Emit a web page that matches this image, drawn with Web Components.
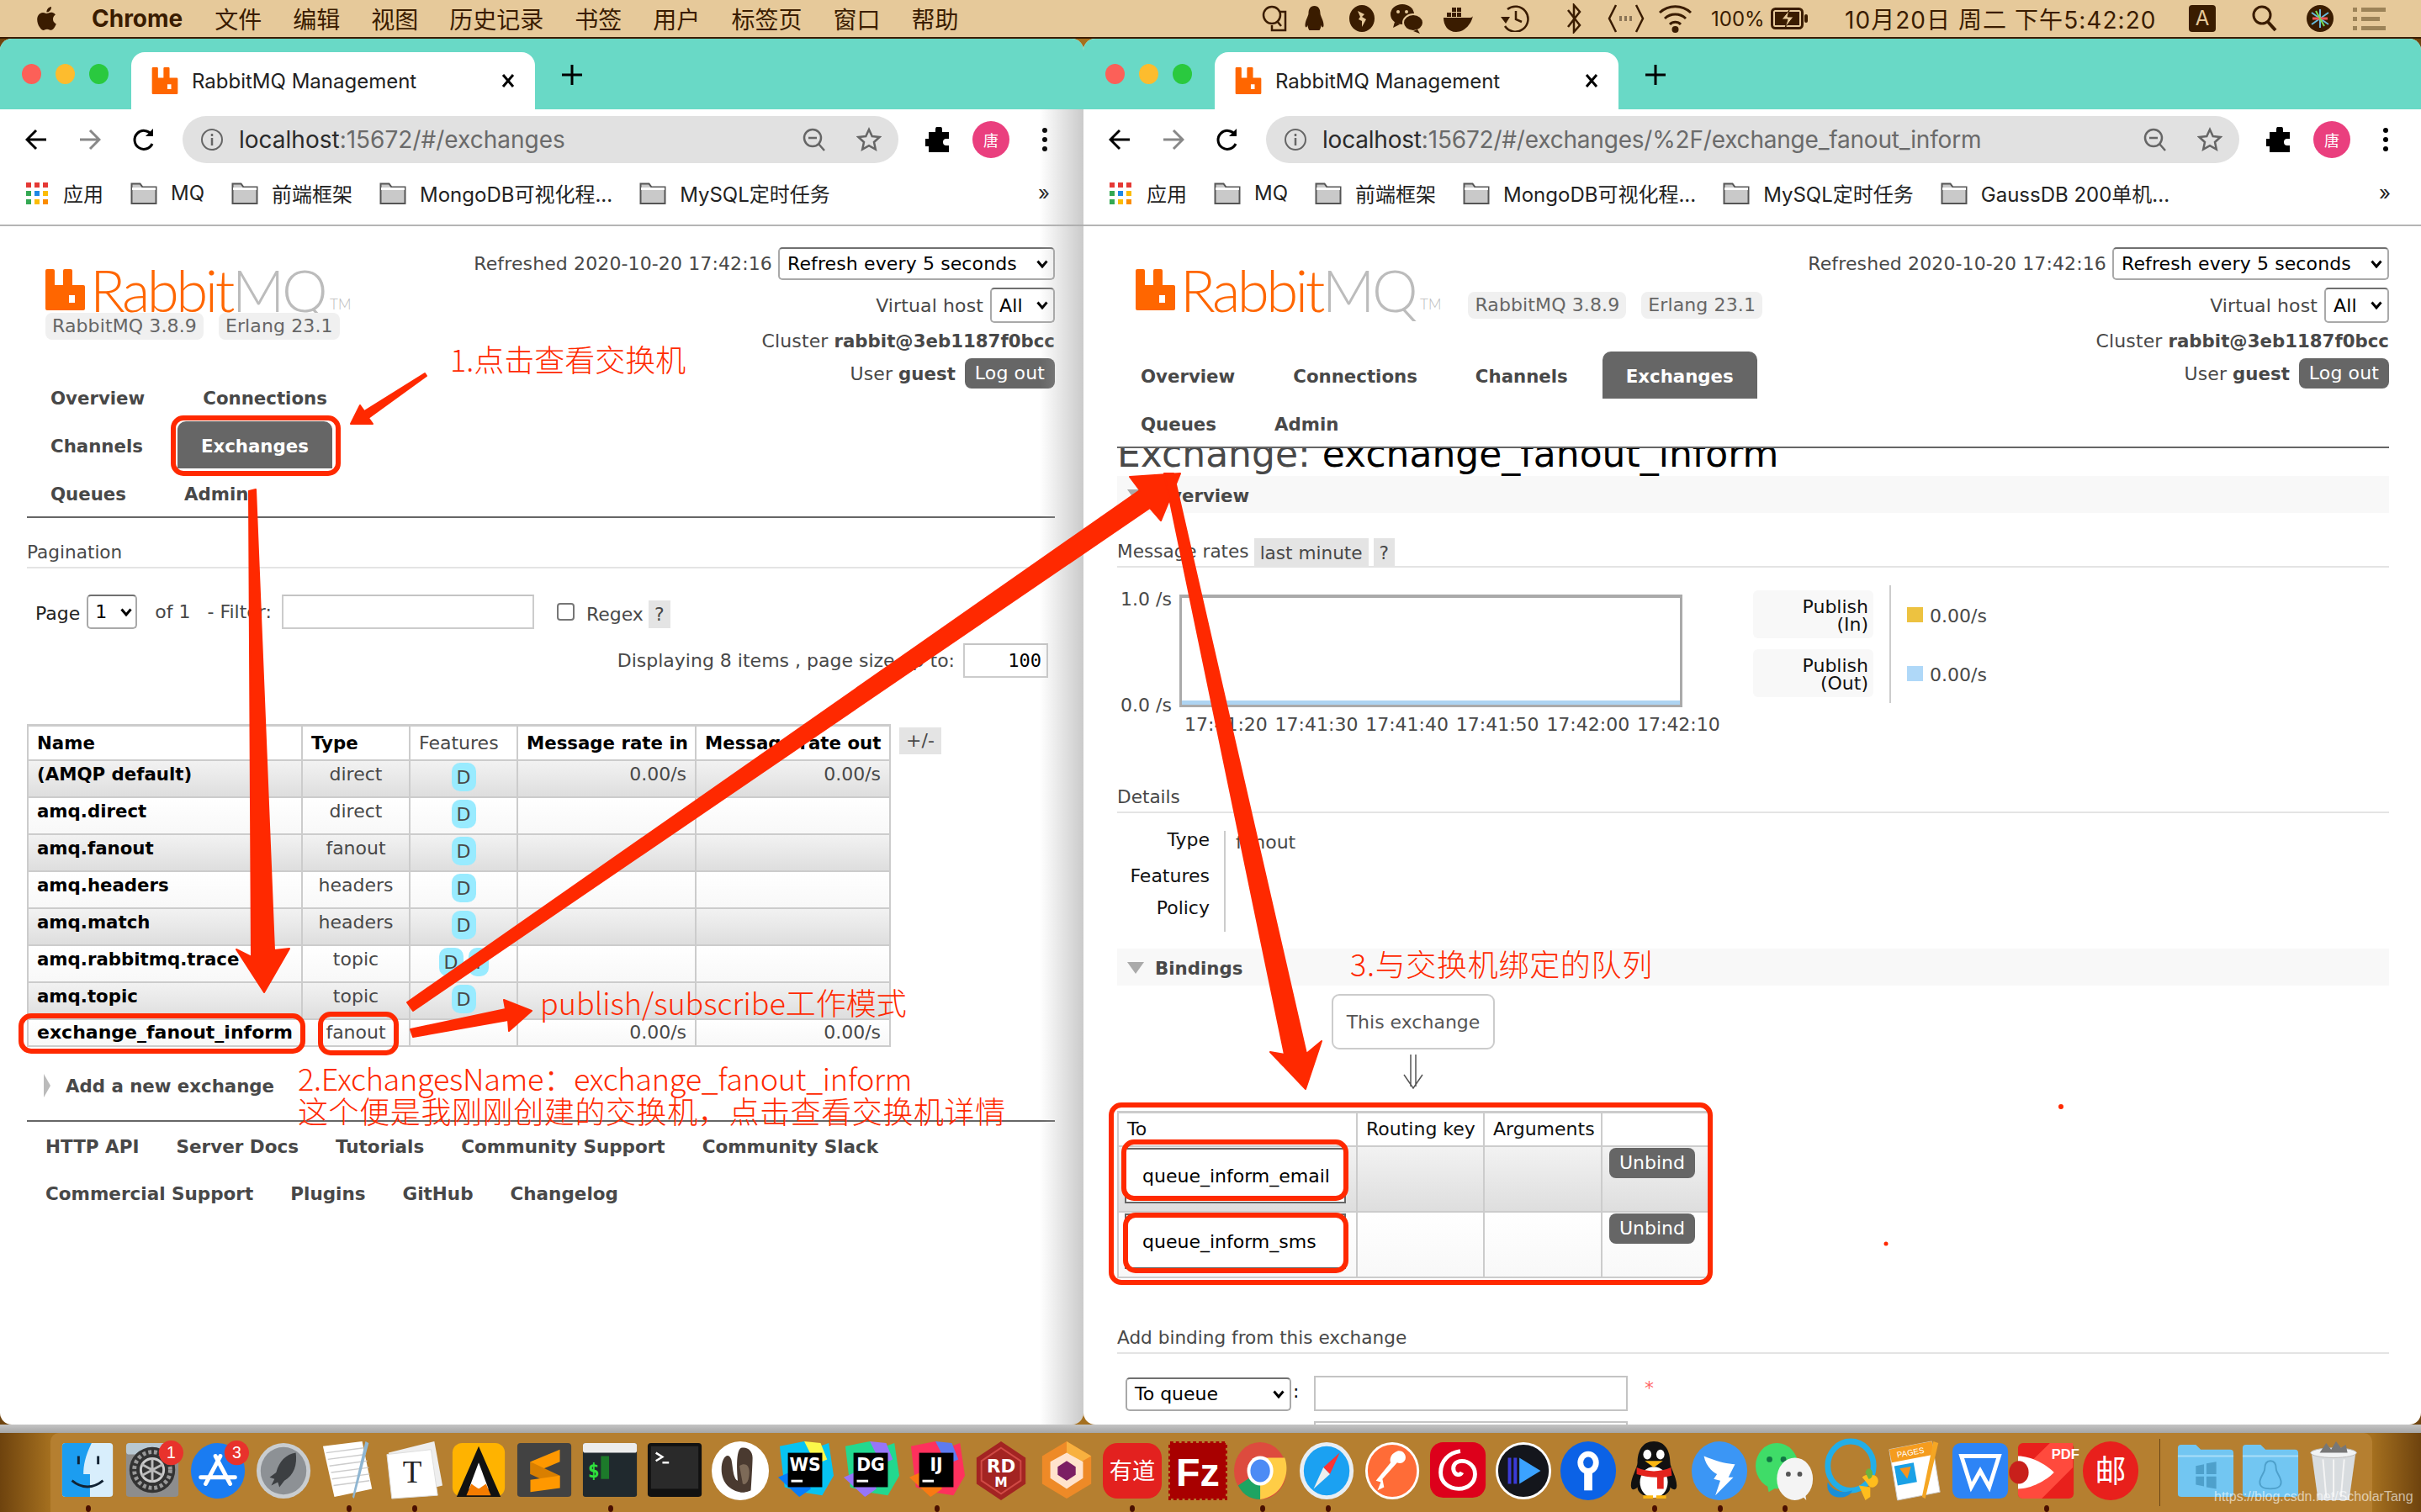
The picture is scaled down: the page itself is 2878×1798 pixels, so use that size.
<!DOCTYPE html>
<html lang="zh">
<head>
<meta charset="utf-8">
<title>RabbitMQ Management</title>
<style>
    html, body { margin: 0; padding: 0; }
    body {
        width: 2878px;
        height: 1798px;
        overflow: hidden;
        position: relative;
        display: flex;
        flex-direction: column;
        background: linear-gradient(90deg, #6e430e 0, #a5701f 60px, #a5701f 2820px, #6e430e 2878px);
    }
    .windows { display: flex; height: 1648px; flex: none; }
    .band { height: 10px; flex: none; background: linear-gradient(#c4c4c4, #a6a6a6); }
</style>
</head>
<body>
<mac-menubar></mac-menubar>
<div class="windows">
    <browser-window style="width:1288px" shade inset="4">
        <rmq-header stacked active="Exchanges"></rmq-header>
        <rmq-title top="25">Pagination</rmq-title>
        <pagination-row></pagination-row>
        <exchanges-table></exchanges-table>
        <rmq-footer></rmq-footer>
    </browser-window>
    <browser-window style="width:1590px" right extra>
        <rmq-header active="Exchanges"></rmq-header>
        <exchange-detail></exchange-detail>
    </browser-window>
</div>
<div class="band"></div>
<mac-dock></mac-dock>
<red-annotations></red-annotations>

<script>
const SANS = `Inter, "Noto Sans CJK SC", sans-serif`;
const PAGE_FONT = `"DejaVu Sans", "Noto Sans CJK SC", sans-serif`;
const BOLD_SIZE = "21.3px";

class MacMenubar extends HTMLElement {
    constructor() {
        super();
        this.shadowDOM = this.attachShadow({ mode: "open" });
    }

    connectedCallback() {
        const menus = ["文件", "编辑", "视图", "历史记录", "书签", "用户", "标签页", "窗口", "帮助"];
        this.shadowDOM.innerHTML = `
        <style>
            :host {
                display: flex;
                align-items: center;
                height: 44px;
                flex: none;
                background: #e6c99a;
                border-bottom: 2px solid #3a1c00;
                color: #3a1c00;
                font: 28px ${SANS};
                padding-left: 43px;
                box-sizing: content-box;
            }
            svg { display: block; flex: none; fill: #3a1c00; }
            b { font-weight: 700; margin: 0 1px 0 41px; }
            .menu { margin-left: 37px; white-space: nowrap; }
            .right { display: flex; align-items: center; margin-left: auto; padding-right: 42px; }
            .right > * { flex: none; }
            .pct { font-size: 24px; width: 61px; }
            .date { width: 368px; white-space: nowrap; font-size: 28px; letter-spacing: 1.05px; }
        </style>
        <svg width="25" height="32" viewBox="3 1 18 22"><path d="M18.71 19.5c-.83 1.24-1.71 2.45-3.05 2.47-1.34.03-1.77-.79-3.29-.79-1.53 0-2 .77-3.27.82-1.31.05-2.3-1.32-3.14-2.53C4.25 17 2.94 12.45 4.7 9.39c.87-1.52 2.43-2.48 4.12-2.51 1.28-.02 2.5.87 3.29.87.78 0 2.26-1.07 3.81-.91.65.03 2.47.26 3.64 1.98-.09.06-2.17 1.28-2.15 3.81.03 3.02 2.65 4.03 2.68 4.04-.03.07-.42 1.44-1.38 2.83M13 3.5c.73-.83 1.94-1.46 2.94-1.5.13 1.17-.34 2.35-1.04 3.19-.69.85-1.83 1.51-2.95 1.42-.15-1.15.41-2.35 1.05-3.11z"/></svg>
        <b>Chrome</b>
        ${menus.map(m => `<span class="menu">${m}</span>`).join("")}
        <div class="right">
            <svg width="31" height="32" viewBox="0 0 31 32" style="fill:none;stroke:#3a1c00;stroke-width:2.5"><circle cx="12" cy="12" r="10"/><path d="M18 19l5 6M21 8h7v22H12v-6"/></svg>
            <svg style="margin-left:19px" width="25" height="32" viewBox="0 0 25 32"><path d="M12.5 1c5 0 7 4 7 9 0 3 4 8 4 14 0 2-1 3-2 2l-1-2c0 3-2 6-2 6h-12s-2-3-2-6l-1 2c-1 1-2 0-2-2 0-6 4-11 4-14 0-5 2-9 7-9z"/></svg>
            <svg style="margin-left:29px" width="30" height="32" viewBox="0 0 30 32"><ellipse cx="15" cy="16" rx="15" ry="16"/><path d="M10 7l8 4-3 3 5 3-5 9 0-7-4-2 2-3z" fill="#e6c99a"/></svg>
            <svg style="margin-left:18px" width="40" height="36" viewBox="0 0 40 36"><ellipse cx="15" cy="13" rx="14" ry="12"/><path d="M6 22l-2 7 8-4z"/><ellipse cx="28" cy="23" rx="12" ry="10" stroke="#e6c99a" stroke-width="2"/><path d="M33 31l3 5-8-3z"/><circle cx="10" cy="10" r="2" fill="#e6c99a"/><circle cx="20" cy="10" r="2" fill="#e6c99a"/></svg>
            <svg style="margin-left:23px" width="36" height="32" viewBox="0 0 36 32"><path d="M1 15h32c3 0 3-3 3-3-1 9-9 20-20 20C6 32 1 24 1 15z"/><path d="M5 9h5v5H5zM11 9h5v5h-5zM17 9h5v5h-5zM11 3h5v5h-5zM17 3h5v5h-5z"/></svg>
            <svg style="margin-left:32px" width="36" height="32" viewBox="0 0 36 32"><path d="M9 5a15 15 0 1 1-3 20" fill="none" stroke="#3a1c00" stroke-width="2.5"/><path d="M1 14h11l-5 8z"/><path d="M19 7v10l7 3" fill="none" stroke="#3a1c00" stroke-width="2.5"/></svg>
            <svg style="margin-left:41px" width="22" height="36" viewBox="0 0 22 36"><path d="M4 8l14 18-7 8V2l7 8-14 18" fill="none" stroke="#3a1c00" stroke-width="2.5"/></svg>
            <svg style="margin-left:29px" width="44" height="36" viewBox="0 0 44 36"><path d="M10 2L2 18l8 16M34 2l8 16-8 16" fill="none" stroke="#3a1c00" stroke-width="2.5"/><path d="M14 15h3v6h-3zM20 15h3v6h-3zM26 15h3v6h-3z" fill="#8a7456"/></svg>
            <svg style="margin-left:16px" width="41" height="36" viewBox="0 0 41 36"><path d="M2 11a27 27 0 0 1 37 0M8 18a18 18 0 0 1 25 0M14 25a9 9 0 0 1 13 0" fill="none" stroke="#3a1c00" stroke-width="3"/><circle cx="20.5" cy="31" r="4"/></svg>
            <span class="pct" style="margin-left:22px">100%</span>
            <svg style="margin-left:10px" width="44" height="26" viewBox="0 0 44 26"><rect x="1.5" y="1.5" width="36" height="23" rx="4" fill="none" stroke="#3a1c00" stroke-width="3"/><rect x="40" y="8" width="4" height="10" rx="2"/><rect x="5" y="5" width="29" height="16"/><path d="M22 3l-9 11h7l-3 10 10-13h-7z" fill="#e6c99a" stroke="#3a1c00"/></svg>
            <span class="date" style="margin-left:44px">10月20日 周二 下午5:42:20</span>
            <span style="margin-left:41px;width:32px;height:32px;border-radius:4px;background:#3a1c00;color:#e6c99a;font-size:24px;text-align:center;line-height:32px">A</span>
            <svg style="margin-left:43px" width="31" height="32" viewBox="0 0 31 32"><circle cx="12" cy="12" r="10" fill="none" stroke="#3a1c00" stroke-width="3"/><path d="M19 20l9 10" stroke="#3a1c00" stroke-width="4"/></svg>
            <svg style="margin-left:33px" width="34" height="32" viewBox="0 0 34 32"><circle cx="17" cy="16" r="16" fill="#3a1c00"/><path d="M17 5v22M7 9l20 14M27 9L7 23" stroke="#6bd" stroke-width="2"/><path d="M8 16h18" stroke="#e55" stroke-width="3"/><path d="M12 7l10 18" stroke="#7d5" stroke-width="2"/></svg>
            <svg style="margin-left:22px" width="39" height="30" viewBox="0 0 39 30"><path d="M0 2h5v5H0zM10 2h29v5H10zM0 13h5v5H0zM10 13h22v5H10zM0 24h5v5H0zM10 24h29v5H10z" fill="#9c8358"/></svg>
        </div>`;
    }
}
customElements.define("mac-menubar", MacMenubar);

// Folder for the bookmark bar
const FOLDER = `<svg width="32" height="26" viewBox="0 0 32 26" style="flex:none"><path d="M1.5 25V1.5h10l3 4h16V25z" fill="#c9c9c9" stroke="#555" stroke-width="2"/><path d="M2 6h28v3H2z" fill="#fff"/></svg>`;
const RABBIT = (w, h) => `<svg width="${w}" height="${h}" viewBox="0 0 47 49" style="display:block;flex:none"><path fill="#ff6600" fill-rule="evenodd" d="M2 0h7a2 2 0 0 1 2 2v17h10V2a2 2 0 0 1 2-2h7a2 2 0 0 1 2 2v17h13a2 2 0 0 1 2 2v26a2 2 0 0 1-2 2H2a2 2 0 0 1-2-2V2a2 2 0 0 1 2-2zM28 31v9h7v-9z"/></svg>`;

class BrowserWindow extends HTMLElement {
    constructor() {
        super();
        this.shadowDOM = this.attachShadow({ mode: "open" });
    }

    connectedCallback() {
        const isRight = this.hasAttribute("right");
        const url = isRight
            ? `<span>localhost</span>:15672/#/exchanges/%2F/exchange_fanout_inform`
            : `<span>localhost</span>:15672/#/exchanges`;
        const marks = ["MQ", "前端框架", "MongoDB可视化程...", "MySQL定时任务"];
        if (isRight) marks.push("GaussDB 200单机...");
        const inset = parseInt(this.getAttribute("inset") || "0");

        this.shadowDOM.innerHTML = `
        <style>
            :host {
                display: flex;
                flex-direction: column;
                flex: none;
                position: relative;
                height: 1648px;
                overflow: hidden;
                background: #fff;
                border-radius: 14px;
                color: #000;
            }
            .strip {
                height: 84px;
                flex: none;
                background: #69d9c6;
                display: flex;
                align-items: flex-end;
                position: relative;
            }
            .lights {
                display: flex;
                gap: 17px;
                align-self: center;
                padding-left: 26px;
                width: 130px;
                box-sizing: border-box;
                flex: none;
            }
            .lights i { width: 23px; height: 24px; border-radius: 50%; display: block; flex: none; }
            .tab {
                width: 480px;
                height: 68px;
                background: #fff;
                border-radius: 16px 16px 0 0;
                display: flex;
                align-items: center;
                margin-left: 26px;
                padding: 0 20px 0 24px;
                box-sizing: border-box;
                font: 24px ${SANS};
                color: #222;
                flex: none;
            }
            .tab span { margin-left: 16px; flex: 1; white-space: nowrap; }
            .tab svg.x { flex: none; margin-right: 4px; }
            .plus { margin: 0 0 29px 32px; flex: none; }
            .toolbar {
                height: 72px;
                flex: none;
                display: flex;
                align-items: center;
                padding-left: 11px;
                padding-right: ${10 + inset}px;
            }
            .btn { width: 64px; height: 56px; display: flex; align-items: center; justify-content: center; flex: none; }
            .omni {
                flex: 1;
                height: 56px;
                margin: 0 14px;
                background: #e1e1e1;
                border-radius: 28px;
                display: flex;
                align-items: center;
                padding: 0 20px 0 22px;
                box-sizing: border-box;
                font: 28px ${SANS};
                color: #6a6a6a;
                white-space: nowrap;
            }
            .omni span { color: #2a2a2a; }
            .omni .url { margin-left: 19px; flex: 1; ${isRight ? "letter-spacing: -.2px;" : ""} }
            .avatar {
                width: 44px;
                height: 44px;
                border-radius: 50%;
                background: #ea3f7e;
                color: #fff;
                font: 18px "Noto Sans CJK SC", sans-serif;
                display: flex;
                align-items: center;
                justify-content: center;
            }
            .marks {
                height: 55px;
                flex: none;
                border-bottom: 2px solid #b4b4b4;
                box-sizing: content-box;
                display: flex;
                align-items: center;
                padding-left: 31px;
                gap: 32px;
                font: 24px ${SANS};
                color: #222;
                padding-bottom: 10px;
                padding-right: ${36 + inset}px;
                white-space: nowrap;
            }
            .mark { display: flex; align-items: center; gap: 16px; }
            .apps { display: grid; grid-template-columns: repeat(3, 6px); grid-auto-rows: 6px; gap: 4px; }
            .apps i { display: block; }
            .more { margin-left: auto; font-size: 24px; }
            .page {
                flex: 1;
                min-height: 0;
                padding: 0 ${isRight ? 38 : 34}px 0 ${isRight ? 40 : 32}px;
                position: relative;
                overflow: hidden;
            }
            .shade {
                position: absolute;
                right: 0;
                top: 84px;
                bottom: 0;
                width: 52px;
                background: linear-gradient(90deg, rgba(170,170,170,0), rgba(170,170,170,.62));
                pointer-events: none;
            }
        </style>
        <div class="strip">
            <div class="lights"><i style="background:#fc6058"></i><i style="background:#fdbc2e"></i><i style="background:#2ac93f"></i></div>
            <div class="tab">
                ${RABBIT(32, 32)}
                <span>RabbitMQ Management</span>
                <svg class="x" width="16" height="18" viewBox="0 0 16 18"><path d="M2 2l12 14M14 2L2 16" stroke="#000" stroke-width="3"/></svg>
            </div>
            <svg class="plus" width="24" height="24" viewBox="0 0 24 24"><path d="M12 0v24M0 12h24" stroke="#000" stroke-width="3"/></svg>
        </div>
        <div class="toolbar">
            <div class="btn"><svg width="26" height="26" viewBox="0 0 26 26" fill="none" stroke="#000" stroke-width="3"><path d="M25 13H3M13 2L2 13l11 11"/></svg></div>
            <div class="btn"><svg width="26" height="26" viewBox="0 0 26 26" fill="none" stroke="#888" stroke-width="3"><path d="M1 13h22M13 2l11 11-11 11"/></svg></div>
            <div class="btn"><svg width="28" height="28" viewBox="0 0 28 28" fill="none" stroke="#000" stroke-width="3"><path d="M24 19a11 11 0 1 1-1-11"/><path d="M25 1v9h-9" fill="#000" stroke="none"/></svg></div>
            <div class="omni">
                <svg width="26" height="26" viewBox="0 0 26 26" fill="none" stroke="#666" stroke-width="2"><circle cx="13" cy="13" r="12"/><path d="M13 11v9M13 6v3" stroke-width="2.5"/></svg>
                <div class="url">${url}</div>
                <svg width="28" height="28" viewBox="0 0 28 28" fill="none" stroke="#666" stroke-width="2.5"><circle cx="12" cy="12" r="10"/><path d="M7 12h10M19 19l7 8"/></svg>
                <svg style="margin-left:36px" width="30" height="30" viewBox="0 0 30 30" fill="none" stroke="#666" stroke-width="2.5"><path d="M15 3l3.7 8 8.8 1-6.5 6 1.8 8.6L15 22.2l-7.8 4.4L9 18l-6.5-6 8.8-1z"/></svg>
            </div>
            <div class="btn"><svg width="28" height="30" viewBox="0 0 28 30"><path d="M11 3a4 4 0 0 1 8 0v3h8v8h-3a4 4 0 0 0 0 8h3v8H3v-7H0a4 4 0 0 1 0-9h3V6h8z" transform="translate(1)"/></svg></div>
            <div class="btn"><div class="avatar">唐</div></div>
            <div class="btn"><svg width="6" height="28" viewBox="0 0 6 28"><circle cx="3" cy="3" r="3"/><circle cx="3" cy="14" r="3"/><circle cx="3" cy="25" r="3"/></svg></div>
        </div>
        <div class="marks">
            <div class="mark" style="gap:18px">
                <div class="apps">
                    <i style="background:#e53935"></i><i style="background:#e53935"></i><i style="background:#e53935"></i>
                    <i style="background:#34a853"></i><i style="background:#1e88e5"></i><i style="background:#fbbc05"></i>
                    <i style="background:#34a853"></i><i style="background:#fbbc05"></i><i style="background:#fb8c00"></i>
                </div>
                应用
            </div>
            ${marks.map(m => `<div class="mark">${FOLDER}${m}</div>`).join("")}
            <div class="more">»</div>
        </div>
        <div class="page"><slot></slot></div>
        ${this.hasAttribute("shade") ? `<div class="shade"></div>` : ""}`;
    }
}
customElements.define("browser-window", BrowserWindow);

class RmqSelect extends HTMLElement {
    constructor() {
        super();
        this.shadowDOM = this.attachShadow({ mode: "open" });
    }

    connectedCallback() {
        this.shadowDOM.innerHTML = `
        <style>
            :host {
                display: inline-flex;
                align-items: center;
                box-sizing: border-box;
                background: #fff;
                border: 2px solid #a9a9a9;
                border-top-color: #707070;
                border-radius: 5px;
                color: #000;
                padding: 0 6px 0 9px;
                font: 22px ${PAGE_FONT};
                white-space: nowrap;
                flex: none;
                justify-content: space-between;
            }
            svg { flex: none; margin-left: 6px; }
        </style>
        <span><slot></slot></span>
        <svg width="14" height="10" viewBox="0 0 14 10" fill="none" stroke="#000" stroke-width="3"><path d="M1.5 1.5L7 8l5.500-6.500"/></svg>`;
    }
}
customElements.define("rmq-select", RmqSelect);

class RmqHeader extends HTMLElement {
    constructor() {
        super();
        this.shadowDOM = this.attachShadow({ mode: "open" });
    }

    connectedCallback() {
        const stacked = this.hasAttribute("stacked");
        const active = this.getAttribute("active");
        const tabs = ["Overview", "Connections", "Channels", "Exchanges", "Queues", "Admin"];
        this.shadowDOM.innerHTML = `
        <style>
            :host {
                display: flex;
                justify-content: space-between;
                align-items: flex-start;
                border-bottom: 2px solid #666;
                color: #484848;
                font: 22px ${PAGE_FONT};
                letter-spacing: .12px;
            }
            .left { padding-top: 51px; flex: none; }
            .brand {
                display: flex;
                padding-left: 22px;
                ${stacked ? "flex-direction: column; gap: 3px;" : "align-items: flex-end;"}
            }
            .logo { display: flex; align-items: flex-end; height: 49px; flex: none; }
            .word {
                font: 300 69px Lato, "Liberation Sans", sans-serif;
                line-height: 49px;
                height: 49px;
                margin-left: 6px;
                letter-spacing: -3.5px;
                color: #ff6600;
                white-space: nowrap;
            }
            .word em { font-style: normal; color: #bcbcbc; }
            .tm { font: 300 17px Lato, sans-serif; letter-spacing: 0; color: #bcbcbc; margin-left: 6px; line-height: 14px; }
            .vers { display: flex; gap: 18px; ${stacked ? "" : "margin: 0 0 -10px 32px;"} }
            .vers span {
                background: #f0f0f0;
                border-radius: 8px;
                height: 32px;
                line-height: 32px;
                padding: 0 8px;
                white-space: nowrap;
                color: #666;
            }
            nav {
                display: flex;
                flex-wrap: wrap;
                column-gap: 13px;
                row-gap: 1px;
                width: ${stacked ? 480 : 820}px;
                margin-top: ${stacked ? 40 : 49}px;
            }
            nav a {
                height: 56px;
                line-height: 59px;
                padding: 0 28px;
                font-weight: 700;
                font-size: ${BOLD_SIZE};
                letter-spacing: 0;
                color: #484848;
                white-space: nowrap;
                border-radius: 10px 10px 0 0;
            }
            nav a.on { background: #666; color: #fff; }
            .info {
                margin-top: 25px;
                display: flex;
                flex-direction: column;
                align-items: flex-end;
                flex: none;
            }
            .line { display: flex; align-items: center; gap: 7px; white-space: nowrap; }
            b { color: #484848; font-size: ${BOLD_SIZE}; letter-spacing: 0; }
            .logout {
                background: #666;
                color: #fff;
                border-radius: 8px;
                height: 36px;
                line-height: 36px;
                padding: 0 12px;
                margin-left: 4px;
            }
        </style>
        <div class="left">
            <div class="brand">
                <div class="logo">
                    ${RABBIT(47, 49)}
                    <div class="word">Rabbit<em>MQ</em></div>
                    <div class="tm">TM</div>
                </div>
                <div class="vers"><span>RabbitMQ 3.8.9</span><span>Erlang 23.1</span></div>
            </div>
            <nav>${tabs.map(t => `<a class="${t === active ? "on" : ""}">${t}</a>`).join("")}</nav>
        </div>
        <div class="info">
            <div class="line">Refreshed 2020-10-20 17:42:16 <rmq-select style="height:39px;width:329px">Refresh every 5 seconds</rmq-select></div>
            <div class="line" style="margin-top:9px;gap:8px">Virtual host <rmq-select style="height:42px;width:77px">All</rmq-select></div>
            <div class="line" style="margin-top:5px;height:33px">Cluster <b>rabbit@3eb1187f0bcc</b></div>
            <div class="line" style="margin-top:4px">User <b>guest</b> <span class="logout">Log out</span></div>
        </div>`;
    }
}
customElements.define("rmq-header", RmqHeader);

class RmqTitle extends HTMLElement {
    constructor() {
        super();
        this.shadowDOM = this.attachShadow({ mode: "open" });
    }

    connectedCallback() {
        this.shadowDOM.innerHTML = `
        <style>
            :host {
                display: flex;
                align-items: flex-end;
                height: 35px;
                box-sizing: border-box;
                border-bottom: 2px solid #e4e4e4;
                margin-top: ${this.getAttribute("top") || 0}px;
                color: #484848;
                font: 21.6px/35px ${PAGE_FONT};
                gap: 6px;
            }
            ::slotted(span) {
                background: #e4e4e4;
                padding: 0 7px;
                line-height: 35px;
                height: 33px;
            }
        </style>
        <slot></slot>`;
    }
}
customElements.define("rmq-title", RmqTitle);

class RmqPanel extends HTMLElement {
    constructor() {
        super();
        this.shadowDOM = this.attachShadow({ mode: "open" });
    }

    connectedCallback() {
        this.shadowDOM.innerHTML = `
        <style>
            :host {
                display: flex;
                align-items: center;
                height: 44px;
                box-sizing: border-box;
                padding-top: 2px;
                background: #f8f8f8;
                padding-left: 12px;
                color: #484848;
                font: 700 ${BOLD_SIZE} ${PAGE_FONT};
                gap: 13px;
            }
            svg { flex: none; }
        </style>
        <svg width="20" height="14" viewBox="0 0 20 14"><path d="M0 0h20L10 14z" fill="#aaa"/></svg>
        <slot></slot>`;
    }
}
customElements.define("rmq-panel", RmqPanel);

class PaginationRow extends HTMLElement {
    constructor() {
        super();
        this.shadowDOM = this.attachShadow({ mode: "open" });
    }

    connectedCallback() {
        this.shadowDOM.innerHTML = `
        <style>
            :host {
                display: block;
                color: #484848;
                font: 22px ${PAGE_FONT};
            }
            .row { display: flex; align-items: center; height: 41px; margin-top: 31px; padding-left: 10px; white-space: nowrap; }
            .box {
                box-sizing: border-box;
                height: 41px;
                border: 2px solid #ccc;
                border-top-color: #c4c4c4;
                background: #fff;
                flex: none;
            }
            .check {
                width: 21px;
                height: 21px;
                box-sizing: border-box;
                border: 2px solid #767676;
                border-radius: 4px;
                background: #fff;
                flex: none;
                margin: 0 14px 0 27px;
            }
            .help { background: #e4e4e4; height: 33px; width: 26px; text-align: center; line-height: 33px; margin: 6px 0 0 6px; flex: none; }
            .size {
                display: flex;
                align-items: center;
                justify-content: flex-end;
                height: 41px;
                margin-top: 17px;
                padding-right: 8px;
                white-space: nowrap;
            }
            .mono {
                width: 101px;
                margin-left: 10px;
                font: 22px "DejaVu Sans Mono", monospace;
                color: #000;
                text-align: right;
                padding-right: 6px;
                line-height: 37px;
            }
        </style>
        <div class="row">
            <span style="color:#222;padding-top:3px">Page</span>
            <rmq-select style="width:60px;height:41px;margin-left:8px;padding:0 4px 0 8px">1</rmq-select>
            <span style="margin-left:21px">of 1</span>
            <span style="margin-left:20px">- Filter:</span>
            <div class="box" style="width:300px;margin-left:12px"></div>
            <div class="check"></div>
            <span style="padding-top:6px">Regex</span>
            <div class="help">?</div>
        </div>
        <div class="size">Displaying 8 items , page size up to:<div class="box mono">100</div></div>`;
    }
}
customElements.define("pagination-row", PaginationRow);

const TABLE_CSS = `
    table { border-collapse: collapse; table-layout: fixed; font: 22px/22px ${PAGE_FONT}; color: #484848; }
    th, td { border: 2px solid #ccc; padding: 5px 10px 0; vertical-align: top; box-sizing: border-box; overflow: visible; white-space: nowrap; }
    th { text-align: left; font-weight: 400; background: #fff; vertical-align: middle; padding-top: 2px; }
    tr:first-child th { border-top-width: 3px; }
    tr.a td { background: linear-gradient(#f2f2f2, #dedede); }
    tr.b td { background: linear-gradient(#fff, #f8f8f8); }
    th.b { font-weight: 700; color: #000; font-size: ${BOLD_SIZE}; }
`;

class ExchangesTable extends HTMLElement {
    constructor() {
        super();
        this.shadowDOM = this.attachShadow({ mode: "open" });
    }

    connectedCallback() {
        const rows = [
            ["(AMQP default)", "direct", "D", "0.00/s", "0.00/s"],
            ["amq.direct", "direct", "D", "", ""],
            ["amq.fanout", "fanout", "D", "", ""],
            ["amq.headers", "headers", "D", "", ""],
            ["amq.match", "headers", "D", "", ""],
            ["amq.rabbitmq.trace", "topic", "DI", "", ""],
            ["amq.topic", "topic", "D", "", ""],
            ["exchange_fanout_inform", "fanout", "", "0.00/s", "0.00/s"]
        ];
        this.shadowDOM.innerHTML = `
        <style>
            :host { display: block; margin-top: 55px; }
            ${TABLE_CSS}
            .wrap { display: flex; align-items: flex-start; gap: 10px; }
            .name { font-weight: 700; color: #000; padding-left: 10px; font-size: ${BOLD_SIZE}; }
            .c { text-align: center; }
            .r { text-align: right; }
            td.f { padding: 2px 0 0; text-align: center; font-size: 0; }
            .d {
                display: inline-block;
                background: #99ebff;
                border-radius: 10px;
                height: 34px;
                width: 29px;
                line-height: 36px;
                font-size: 22px;
                margin: 0 3px;
                text-align: center;
            }
            .pm {
                background: #e4e4e4;
                width: 50px;
                height: 32px;
                text-align: center;
                margin-top: 4px;
                font: 22px/32px ${PAGE_FONT};
                color: #484848;
            }
            .add { display: flex; align-items: center; height: 33px; margin-top: 30px; padding-left: 20px; color: #484848; font: 700 ${BOLD_SIZE} ${PAGE_FONT}; }
            .add svg { margin-right: 18px; }
        </style>
        <div class="wrap">
            <table style="width:1025px">
                <colgroup><col style="width:326px"><col style="width:128px"><col style="width:128px"><col style="width:212px"><col style="width:231px"></colgroup>
                <tr style="height:41px"><th class="b">Name</th><th class="b">Type</th><th>Features</th><th class="b">Message rate in</th><th class="b">Message rate out</th></tr>
                ${rows.map((r, i) => `
                <tr class="${i % 2 ? "b" : "a"}" style="height:${i === 7 ? 32 : 44}px">
                    <td class="name" ${i === 7 ? `style="padding-top:4px;font-size:22px"` : ""}>${r[0]}</td>
                    <td class="c" ${i === 7 ? `style="padding-top:4px"` : ""}>${r[1]}</td>
                    <td class="f">${r[2].split("").map(x => `<span class="d" style="${x === "I" ? "width:24px" : ""}">${x}</span>`).join("")}</td>
                    <td class="r" ${i === 7 ? `style="padding-top:4px"` : ""}>${r[3]}</td>
                    <td class="r" ${i === 7 ? `style="padding-top:4px"` : ""}>${r[4]}</td>
                </tr>`).join("")}
            </table>
            <div class="pm">+/-</div>
        </div>
        <div class="add">
            <svg width="8" height="28" viewBox="0 0 8 28"><path d="M0 0l8 14L0 28z" fill="#bbb"/></svg>
            Add a new exchange
        </div>`;
    }
}
customElements.define("exchanges-table", ExchangesTable);

class RmqFooter extends HTMLElement {
    constructor() {
        super();
        this.shadowDOM = this.attachShadow({ mode: "open" });
    }

    connectedCallback() {
        const links = ["HTTP API", "Server Docs", "Tutorials", "Community Support", "Community Slack", "Commercial Support", "Plugins", "GitHub", "Changelog"];
        this.shadowDOM.innerHTML = `
        <style>
            :host {
                display: flex;
                flex-wrap: wrap;
                border-top: 2px solid #666;
                margin-top: 24px;
                padding-top: 2px;
                color: #484848;
                font: 700 21.5px/56px ${PAGE_FONT};
            }
            a { padding: 0 22px; white-space: nowrap; }
        </style>
        ${links.map(l => `<a>${l}</a>`).join("")}`;
    }
}
customElements.define("rmq-footer", RmqFooter);

class RateChart extends HTMLElement {
    constructor() {
        super();
        this.shadowDOM = this.attachShadow({ mode: "open" });
    }

    connectedCallback() {
        const times = ["17:41:20", "17:41:30", "17:41:40", "17:41:50", "17:42:00", "17:42:10"];
        this.shadowDOM.innerHTML = `
        <style>
            :host {
                display: flex;
                align-items: flex-start;
                margin-top: 21px;
                height: 236px;
                color: #484848;
                font: 22px/24px ${PAGE_FONT};
            }
            .axis {
                width: 74px;
                height: 150px;
                margin-top: 5px;
                flex: none;
                display: flex;
                flex-direction: column;
                justify-content: space-between;
                padding-left: 4px;
                box-sizing: border-box;
            }
            .plot { width: 598px; margin-top: 11px; flex: none; }
            .graph {
                height: 134px;
                box-sizing: border-box;
                border: 3px solid #aaa;
                border-top-width: 4px;
                display: flex;
                flex-direction: column;
                justify-content: flex-end;
            }
            .graph i { display: block; height: 5px; background: #aed4f2; }
            .times { display: grid; grid-template-columns: repeat(6, 107.6px); padding-left: 6px; margin-top: 9px; white-space: nowrap; }
            .legend {
                display: grid;
                grid-template-columns: 143px;
                row-gap: 13px;
                padding: 6px 19px 7px 0;
                margin-left: 84px;
                border-right: 2px solid #ccc;
                flex: none;
            }
            .legend div {
                background: #f8f8f8;
                border-radius: 6px;
                height: 57px;
                text-align: right;
                color: #111;
                line-height: 21px;
                padding: 9px 6px 0 0;
                box-sizing: border-box;
            }
            .vals { display: grid; row-gap: 13px; padding: 6px 0 7px 19px; flex: none; }
            .vals div { height: 57px; display: flex; align-items: center; gap: 8px; padding-top: 4px; box-sizing: border-box; }
            .vals i { display: block; width: 19px; height: 18px; margin-top: -4px; }
        </style>
        <div class="axis"><span>1.0 /s</span><span>0.0 /s</span></div>
        <div class="plot">
            <div class="graph"><i></i></div>
            <div class="times">${times.map(t => `<span>${t}</span>`).join("")}</div>
        </div>
        <div class="legend"><div>Publish<br>(In)</div><div>Publish<br>(Out)</div></div>
        <div class="vals">
            <div><i style="background:#edc240"></i>0.00/s</div>
            <div><i style="background:#afd8f8"></i>0.00/s</div>
        </div>`;
    }
}
customElements.define("rate-chart", RateChart);

class ExchangeDetail extends HTMLElement {
    constructor() {
        super();
        this.shadowDOM = this.attachShadow({ mode: "open" });
    }

    connectedCallback() {
        this.shadowDOM.innerHTML = `
        <style>
            :host { display: block; color: #484848; font: 22px ${PAGE_FONT}; }
            ${TABLE_CSS}
            .clip {
                height: 33px;
                overflow: hidden;
                display: flex;
                align-items: flex-end;
                padding-bottom: 4px;
                box-sizing: border-box;
            }
            h1 { margin: 0; font: 400 44px/1 ${PAGE_FONT}; white-space: nowrap; color: #484848; flex: none; }
            h1 b { font-weight: 400; color: #000; }
            .facts {
                display: grid;
                grid-template-columns: 129px 130px;
                grid-template-rows: 43px 38px 39px;
                margin-top: 21px;
                line-height: 22px;
                color: #111;
            }
            .facts span:nth-child(odd) { text-align: right; border-right: 2px solid #ccc; padding-right: 17px; box-sizing: content-box; }
            .facts span:nth-child(even) { padding-left: 12px; padding-top: 3px; color: #484848; }
            .this {
                width: 194px;
                height: 66px;
                margin: 10px 0 0 255px;
                box-sizing: border-box;
                border: 2px solid #ccc;
                border-radius: 9px;
                display: flex;
                align-items: center;
                justify-content: center;
                color: #555;
                white-space: nowrap;
            }
            .arrow { display: block; margin: 6px 0 26px 340px; }
            .q {
                box-sizing: border-box;
                height: 66px;
                margin: 1px 0 0 -3px;
                width: 263px;
                background: #fff;
                border: 2px solid #666;
                padding: 21px 0 0 19px;
                color: #000;
            }
            .bt td { padding: 0 10px; }
            .bt td.to { padding: 0 0 0 10px; }
            .bt th { padding: 0 10px; color: #111; }
            .unbind {
                display: block;
                width: 102px;
                height: 36px;
                line-height: 36px;
                background: #666;
                color: #fff;
                border-radius: 8px;
                text-align: center;
                margin: 1px 0 0 -2px;
            }
            .form { display: flex; align-items: flex-start; margin-top: 26px; padding-left: 10px; color: #000; }
            .input { box-sizing: border-box; border: 2px solid #c4c4c4; height: 42px; width: 373px; background: #fff; flex: none; }
            .next { box-sizing: border-box; border: 2px solid #c4c4c4; height: 42px; width: 373px; margin: 12px 0 0 234px; }
        </style>
        <div class="clip"><h1>Exchange: <b>exchange_fanout_inform</b></h1></div>
        <rmq-panel>Overview</rmq-panel>
        <rmq-title top="30">Message rates <span>last minute</span><span>?</span></rmq-title>
        <rate-chart></rate-chart>
        <rmq-title>Details</rmq-title>
        <div class="facts">
            <span>Type</span><span>fanout</span>
            <span>Features</span><span></span>
            <span>Policy</span><span></span>
        </div>
        <rmq-panel style="margin-top:20px">Bindings</rmq-panel>
        <div class="this">This exchange</div>
        <svg class="arrow" width="24" height="41" viewBox="0 0 24 41" fill="none" stroke="#555" stroke-width="1.5"><path d="M9 0v38M15 0v38M1 24l11 16 11-16"/></svg>
        <table class="bt" style="width:702px">
            <colgroup><col style="width:284px"><col style="width:151px"><col style="width:140px"><col style="width:127px"></colgroup>
            <tr style="height:40px"><th>To</th><th>Routing key</th><th>Arguments</th><th></th></tr>
            <tr class="a" style="height:78px"><td class="to"><div class="q">queue_inform_email</div></td><td></td><td></td><td><span class="unbind">Unbind</span></td></tr>
            <tr class="b" style="height:78px"><td class="to"><div class="q">queue_inform_sms</div></td><td></td><td></td><td><span class="unbind">Unbind</span></td></tr>
        </table>
        <rmq-title top="55">Add binding from this exchange</rmq-title>
        <div class="form">
            <rmq-select style="width:197px;height:40px;margin-top:2px">To queue</rmq-select>
            <span style="margin:6px 0 0 2px;width:25px">:</span>
            <div class="input"></div>
            <span style="color:#f66;margin:2px 0 0 20px">*</span>
        </div>
        <div class="next"></div>`;
    }
}
customElements.define("exchange-detail", ExchangeDetail);

const JB = (name, a, b, c) => `
    <path d="M4 6l30-6 14 8 16-6 6 40-14 24-26-4-20-6z" fill="${a}"/>
    <path d="M34 0l20 2 8 20-14 6z" fill="${b}"/>
    <path d="M2 44l26 24 14-10-8-28z" fill="${c}"/>
    <rect x="14" y="14" width="42" height="42" fill="#000"/>
    <text x="35" y="36" font-family="'DejaVu Sans'" font-size="21" font-weight="700" fill="#fff" text-anchor="middle">${name}</text>
    <rect x="18" y="47" width="14" height="3" fill="#fff"/>`;

const ICONS = {
    finder: `<rect x="4" y="2" width="62" height="66" rx="4" fill="#d8eefc"/><path d="M4 6a4 4 0 0 1 4-4h32c-8 16-10 28-10 38h8v28H8a4 4 0 0 1-4-4z" fill="#1c9df0"/><path d="M24 18v10M48 18v10" stroke="#123" stroke-width="3"/><path d="M16 48c12 10 26 10 38 0" fill="none" stroke="#123" stroke-width="3"/>`,
    sys: `<rect x="3" y="2" width="64" height="66" rx="4" fill="#8d8d8d"/><rect x="3" y="2" width="64" height="14" rx="4" fill="#b8c8d2"/><circle cx="35" cy="35" r="28" fill="#333"/><circle cx="35" cy="35" r="22" fill="none" stroke="#999" stroke-width="5" stroke-dasharray="4 3"/><circle cx="35" cy="35" r="14" fill="none" stroke="#ccc" stroke-width="3"/><path d="M35 21v28M22 42l26-14M22 28l26 14" stroke="#bbb" stroke-width="3"/><circle cx="58" cy="14" r="15" fill="#e8322c"/><text x="58" y="21" font-family="'Liberation Sans'" font-size="20" fill="#fff" text-anchor="middle">1</text>`,
    store: `<ellipse cx="35" cy="36" rx="33" ry="34" fill="#1a7cf2"/><path d="M38 18L20 52M32 18l18 34M14 44h42" stroke="#fff" stroke-width="5" stroke-linecap="round"/><circle cx="58" cy="14" r="15" fill="#e8322c"/><text x="58" y="21" font-family="'Liberation Sans'" font-size="20" fill="#fff" text-anchor="middle">3</text>`,
    launch: `<ellipse cx="35" cy="36" rx="33" ry="34" fill="#c9cdd0"/><ellipse cx="35" cy="36" rx="28" ry="29" fill="#8d9195"/><path d="M50 14c-12 2-20 10-24 24l-8 6 6 2-4 8 8-4 2 6 6-8c12-6 16-20 14-34z" fill="#3c3f42"/>`,
    textedit: `<path d="M4 6l48-6 12 58-46 10z" fill="#fff"/><path d="M8 14l46-6M10 22l46-6M12 30l46-6M14 38l46-6M15 46l46-6M17 54l44-6" stroke="#ccc" stroke-width="1.5"/><path d="M56 0l4 2-18 68-2-2z" fill="#8fb6d2"/>`,
    typora: `<path d="M4 14L60 0l10 54-56 14z" fill="#eee"/><path d="M2 16l54-6 8 56-56 4z" fill="#fff" stroke="#ddd"/><text x="33" y="50" font-family="'Liberation Serif'" font-size="38" fill="#222" text-anchor="middle">T</text>`,
    abricotine: `<rect x="3" y="2" width="64" height="66" rx="12" fill="#ffb300"/><path d="M35 6L8 68h54z" fill="#111"/><path d="M35 26L23 58h24z" fill="#fff"/><path d="M20 66l6-14 9 6 9-6 6 14z" fill="#f57c00"/>`,
    sublime: `<rect x="2" y="2" width="66" height="66" rx="4" fill="#424242"/><path d="M54 10v15L18 40V25z" fill="#ff9800"/><path d="M18 25l36 17v15L18 40z" fill="#d97f00"/><path d="M54 42v15L18 62V47z" fill="#ff9800"/>`,
    iterm: `<rect x="2" y="2" width="66" height="66" rx="3" fill="#20292e"/><rect x="2" y="2" width="66" height="12" rx="3" fill="#ececec"/><text x="8" y="44" font-family="'DejaVu Sans Mono'" font-size="24" font-weight="700" fill="#2fe03d">$</text><rect x="24" y="18" width="10" height="28" fill="#1c7a2a"/>`,
    terminal: `<rect x="2" y="2" width="66" height="66" rx="4" fill="#111"/><rect x="6" y="6" width="58" height="52" fill="#2a2a2a"/><path d="M12 14l8 5-8 5" fill="none" stroke="#fff" stroke-width="2.5"/><path d="M20 26h8" stroke="#fff" stroke-width="2.5"/>`,
    sequel: `<ellipse cx="35" cy="36" rx="35" ry="36" fill="#fff"/><path d="M36 8c8-2 14 4 14 12s-2 40-2 40-8 4-14 2c-10-2-22-10-22-28C12 20 20 12 24 22c2 8 2 24 8 26 0 0-4-36 4-40z" fill="#4a3a30"/><path d="M34 30c6-4 12-2 12 8s-4 16-8 14z" fill="#7d6a58"/>`,
    ws: JB("WS", "#07c3f2", "#fcf84a", "#087cfa"),
    dg: JB("DG", "#22d88f", "#9775f8", "#9775f8"),
    ij: JB("IJ", "#fe315d", "#5d7bf0", "#f97a12"),
    rdm: `<path d="M35 0l30 20v32L35 72 5 52V20z" fill="#a32422"/><path d="M35 8l24 16v24L35 64 11 48V24z" fill="none" stroke="#d04a45" stroke-width="2"/><text x="35" y="38" font-family="'DejaVu Sans'" font-weight="700" font-size="22" fill="#fff" text-anchor="middle">RD</text><text x="35" y="56" font-family="'DejaVu Sans'" font-weight="700" font-size="16" fill="#fff" text-anchor="middle">M</text>`,
    cmake: `<path d="M35 0l30 18v34L35 70 5 52V18z" fill="#ee8a27"/><path d="M35 0l30 18-30 17z" fill="#f8b13f"/><path d="M35 14l20 11v20L35 58 15 45V25z" fill="#ffe3cc"/><path d="M35 24l11 7v10l-11 7-11-7V31z" fill="#7b1f63"/>`,
    youdao: `<rect x="0" y="2" width="72" height="68" rx="18" fill="#e3211f"/><text x="36" y="46" font-family="'Noto Sans CJK SC'" font-size="28" fill="#fff" text-anchor="middle">有道</text>`,
    filezilla: `<rect x="2" y="2" width="68" height="68" fill="#a80000" stroke="#a80000" stroke-width="4" stroke-dasharray="4 3"/><text x="36" y="54" font-family="'Liberation Sans'" font-size="48" font-weight="700" fill="#fff" text-anchor="middle">Fz</text>`,
    chrome: `<ellipse cx="33" cy="36" rx="32" ry="35" fill="#dd4b3e"/><path d="M33 36L6 54C12 66 22 71 33 71L50 36z" fill="#1da462"/><path d="M33 20h30c3 8 3 18 0 26-4 12-12 22-30 25z" fill="#ffcd46"/><ellipse cx="33" cy="36" rx="16" ry="18" fill="#fff"/><ellipse cx="33" cy="36" rx="12" ry="14" fill="#4c8bf5"/>`,
    safari: `<ellipse cx="34" cy="36" rx="33" ry="35" fill="#e9eef3"/><ellipse cx="34" cy="36" rx="28" ry="30" fill="#1ba1f2"/><path d="M50 14L30 32l8 8z" fill="#f33"/><path d="M18 58l12-26 8 8z" fill="#eee"/>`,
    postman: `<ellipse cx="34" cy="36" rx="33" ry="35" fill="#fff"/><ellipse cx="34" cy="36" rx="30" ry="32" fill="#ff6c37"/><path d="M40 12c6-2 12 4 10 10-2 4-6 6-10 4L22 46l2 10-8 4 4-10-6-2 18-22c-2-6 2-12 8-14z" fill="#fff"/>`,
    netease: `<rect x="1" y="1" width="68" height="68" rx="16" fill="#dd001b"/><path d="M38 12c-14 2-24 12-24 26 0 12 10 20 22 20s20-8 20-18-8-16-16-16-12 6-10 12 8 6 10 2" fill="none" stroke="#fff" stroke-width="5"/>`,
    infuse: `<ellipse cx="35" cy="36" rx="34" ry="35" fill="#fff"/><ellipse cx="35" cy="36" rx="31" ry="32" fill="#14161c"/><path d="M30 20l26 16-26 16z" fill="#3ba2ff"/><path d="M16 20h4v32h-4zM23 20h4v32h-4z" fill="#3b3bd8"/>`,
    onepass: `<ellipse cx="35" cy="36" rx="34" ry="36" fill="#0b62e6"/><ellipse cx="35" cy="26" rx="13" ry="14" fill="#fff"/><ellipse cx="35" cy="26" rx="6" ry="7" fill="#0b62e6"/><rect x="30" y="36" width="10" height="24" fill="#fff"/>`,
    qq: `<path d="M35 0c14 0 20 12 20 26 0 6 8 18 8 28 0 6-4 6-8 2 0 6-6 12-20 12s-20-6-20-12c-4 4-8 4-8-2 0-10 8-22 8-28C15 12 21 0 35 0z" fill="#111"/><ellipse cx="35" cy="50" rx="17" ry="19" fill="#fff"/><ellipse cx="27" cy="16" rx="5" ry="6" fill="#fff"/><ellipse cx="43" cy="16" rx="5" ry="6" fill="#fff"/><path d="M24 24h22l-11 8z" fill="#fcb711"/><path d="M14 32c14 6 28 6 42 0l1 10-10 2v14h-8V44c-10 0-18-2-25-4z" fill="#e3231d"/><path d="M22 66h12v4H22zM38 66h12v4H38z" fill="#fcb711"/>`,
    ding: `<ellipse cx="35" cy="36" rx="34" ry="36" fill="#3b96f5"/><path d="M16 18c14 6 28 10 38 10l-8 16h6L30 66l6-18-8-2 4-6c-8-4-14-12-16-22z" fill="#fff"/>`,
    wechat: `<ellipse cx="26" cy="30" rx="26" ry="28" fill="#3fdc68"/><path d="M14 52l2 10 10-6z" fill="#3fdc68"/><circle cx="17" cy="22" r="3.5" fill="#174"/><circle cx="34" cy="22" r="3.5" fill="#174"/><ellipse cx="48" cy="46" rx="22" ry="26" fill="#f4f4f4"/><path d="M56 66l6 6-2-12z" fill="#f4f4f4"/><circle cx="40" cy="40" r="3" fill="#555"/><circle cx="54" cy="40" r="3" fill="#555"/>`,
    circle: `<ellipse cx="36" cy="30" rx="28" ry="30" fill="none" stroke="#22aee8" stroke-width="7"/><path d="M50 44c8 8 8 14 14 12 6-2 8-10 2-14-6-2-12-2-16 2zM46 54l8 18 6-4 0-12z" fill="#ffbd1d"/><path d="M54 38c2-6 6-6 8-2s0 10-4 10z" fill="#6db33f"/><path d="M8 50c6 12 20 14 30 10-2 6-10 10-20 8-8-2-12-10-10-18z" fill="#1a8fd8"/>`,
    pages: `<path d="M4 10L56 0l10 62-52 10z" fill="#fff" stroke="#ccc"/><path d="M4 10L56 0l3 16-52 10z" fill="#f59c1e"/><text x="14" y="20" font-family="'Liberation Sans'" font-size="10" fill="#fff" transform="rotate(-10 14 20)">PAGES</text><rect x="12" y="28" width="24" height="24" fill="#1aa1e6" transform="rotate(-10 24 40)"/><path d="M18 32h14l-7 14z" fill="#f7941d" transform="rotate(-10 24 40)"/><path d="M58 0l6 2-16 68-4-2z" fill="#f5a623"/>`,
    wps: `<rect x="1" y="2" width="68" height="68" rx="10" fill="#2d84f6"/><path d="M12 18h46L46 56l-11-20-11 20z" fill="none" stroke="#fff" stroke-width="5"/>`,
    pdf: `<rect x="1" y="2" width="68" height="68" rx="6" fill="#e8201c"/><path d="M1 40L40 2h28v30L30 70H8a6 6 0 0 1-7-6z" fill="#ff4a3d"/><path d="M1 18c16 0 34 10 44 20-10 10-28 20-44 20z" fill="#fff"/><ellipse cx="2" cy="38" rx="12" ry="14" fill="#c8201b"/><text x="42" y="22" font-family="'Liberation Sans'" font-weight="700" font-size="17" fill="#fff">PDF</text>`,
    mail: `<ellipse cx="35" cy="36" rx="34" ry="36" fill="#e8201c"/><text x="35" y="50" font-family="'Noto Sans CJK SC'" font-size="38" fill="#fff" text-anchor="middle">邮</text>`,
    folderWin: `<path d="M2 16V8a4 4 0 0 1 4-4h18l6 6h36a4 4 0 0 1 4 4v50a4 4 0 0 1-4 4H6a4 4 0 0 1-4-4z" fill="#72c6f2"/><path d="M2 18h68" stroke="#a9def8" stroke-width="2"/><path d="M24 30l10-2v12H24zM37 27l12-2v15H37zM24 43h10v12l-10-2zM37 43h12v15l-12-2z" fill="#4ea0cb"/>`,
    folderLin: `<path d="M2 16V8a4 4 0 0 1 4-4h18l6 6h36a4 4 0 0 1 4 4v50a4 4 0 0 1-4 4H6a4 4 0 0 1-4-4z" fill="#72c6f2"/><path d="M2 18h68" stroke="#a9def8" stroke-width="2"/><path d="M36 24c6 0 7 6 7 10s6 10 6 16-4 8-13 8-13-2-13-8 6-12 6-16 1-10 7-10z" fill="none" stroke="#4ea0cb" stroke-width="2"/>`,
    trash: `<path d="M6 14h54l-8 58H14z" fill="#d8dcdf"/><ellipse cx="33" cy="14" rx="28" ry="6" fill="#f1f3f4" stroke="#bbb"/><path d="M16 14l8-12 6 8 6-10 6 8 6-4 2 10z" fill="#777"/><path d="M20 22l4 46M33 22v46M46 22l-4 46" stroke="#f4f4f4" stroke-width="2"/>`
};

class MacDock extends HTMLElement {
    constructor() {
        super();
        this.shadowDOM = this.attachShadow({ mode: "open" });
    }

    connectedCallback() {
        // name, running dot
        const items = [
            ["finder", 1], ["sys", 0], ["store", 0], ["launch", 0], ["textedit", 1], ["typora", 1], ["abricotine", 0],
            ["sublime", 0], ["iterm", 1], ["terminal", 0], ["sequel", 0], ["ws", 0], ["dg", 0], ["ij", 1], ["rdm", 0],
            ["cmake", 0], ["youdao", 1], ["filezilla", 0], ["chrome", 1], ["safari", 1], ["postman", 0], ["netease", 0],
            ["infuse", 0], ["onepass", 0], ["qq", 1], ["ding", 1], ["wechat", 1], ["circle", 0], ["pages", 0], ["wps", 0],
            ["pdf", 1], ["mail", 0]
        ];
        const cell = (name, dot) => `
            <div class="cell">
                <svg width="70" height="72" viewBox="0 0 72 72">${ICONS[name]}</svg>
                <i class="${dot ? "dot" : ""}"></i>
            </div>`;
        this.shadowDOM.innerHTML = `
        <style>
            :host {
                display: flex;
                height: 94px;
                flex: none;
                margin: 0 58px 0 60px;
                padding-left: 6px;
                background: #b57f30;
                border-radius: 10px 10px 0 0;
                box-sizing: border-box;
            }
            .cell {
                width: 77.6px;
                flex: none;
                display: flex;
                flex-direction: column;
                align-items: center;
                padding-top: 9px;
                box-sizing: border-box;
            }
            svg { display: block; flex: none; overflow: visible; }
            i { display: block; width: 6px; height: 8px; border-radius: 50%; margin-top: 5px; flex: none; }
            i.dot { background: #4a0f00; }
            .sep { width: 1px; height: 80px; margin: 7px 15px 0 18px; background: #6b4716; flex: none; }
        </style>
        ${items.map(i => cell(i[0], i[1])).join("")}
        <div class="sep"></div>
        ${cell("folderWin", 0)}${cell("folderLin", 0)}${cell("trash", 0)}`;
    }
}
customElements.define("mac-dock", MacDock);

class RedAnnotations extends HTMLElement {
    constructor() {
        super();
        this.shadowDOM = this.attachShadow({ mode: "open" });
    }

    connectedCallback() {
        const rect = (x1, y1, x2, y2) => `<rect x="${x1}" y="${y1}" width="${x2 - x1}" height="${y2 - y1}" rx="12"/>`;
        // text, left, vertical centre, letter spacing
        const notes = [
            ["1.点击查看交换机", 535, 426, 0],
            ["publish/subscribe工作模式", 642, 1191, 0],
            ["2.ExchangesName：exchange_fanout_inform", 354, 1281, -.25],
            ["这个便是我刚刚创建的交换机，点击查看交换机详情", 354, 1320, .6],
            ["3.与交换机绑定的队列", 1605, 1145, .7]
        ];
        this.shadowDOM.innerHTML = `
        <style>
            :host { position: absolute; left: 0; top: 0; width: 2878px; height: 1798px; pointer-events: none; display: block; }
            svg { position: absolute; left: 0; top: 0; }
            .note {
                position: absolute;
                color: #ff2900;
                font: 300 36px/36px "Noto Sans CJK SC", sans-serif;
                white-space: nowrap;
                transform: translateY(-50%);
            }
            .mark {
                position: absolute;
                left: 2632px;
                top: 1769px;
                font: 16px/22px "Liberation Sans", sans-serif;
                color: rgba(255, 255, 255, .62);
                white-space: nowrap;
            }
        </style>
        <svg width="2878" height="1798">
            <g fill="none" stroke="#ff2900" stroke-width="6">
                ${rect(206, 497, 402, 563)}
                ${rect(25, 1208, 360, 1250)}
                ${rect(381, 1206, 471, 1252)}
                ${rect(1321, 1314, 2033, 1525)}
                ${rect(1336, 1358, 1600, 1425)}
                ${rect(1338, 1445, 1600, 1511)}
            </g>
            <g fill="#ff2900" stroke="#ff2900" stroke-width="2" stroke-linejoin="round">
                <polygon points="505,444 507,447 438,497 443,504 417,504 428,482 433,489"/>
                <polygon points="296,584 304,582 326,1130 344,1128 314,1180 281,1129 299,1138"/>
                <polygon points="488,1224 601,1200 599,1189 632,1202 605,1226 604,1213 491,1233"/>
                <polygon points="484,1192 1355,583 1343,567 1403,563 1380,619 1367,604 491,1202"/>
                <polygon points="1384,563 1395,563 1553,1253 1571,1238 1552,1295 1510,1251 1527,1254"/>
                <circle cx="2450" cy="1316" r="2"/><circle cx="2242" cy="1479" r="1.5"/>
            </g>
        </svg>
        ${notes.map(n => `<div class="note" style="left:${n[1]}px;top:${n[2]}px;letter-spacing:${n[3]}px">${n[0]}</div>`).join("")}
        <div class="mark">https://blog.csdn.net/ScholarTang</div>`;
    }
}
customElements.define("red-annotations", RedAnnotations);
</script>
</body>
</html>
